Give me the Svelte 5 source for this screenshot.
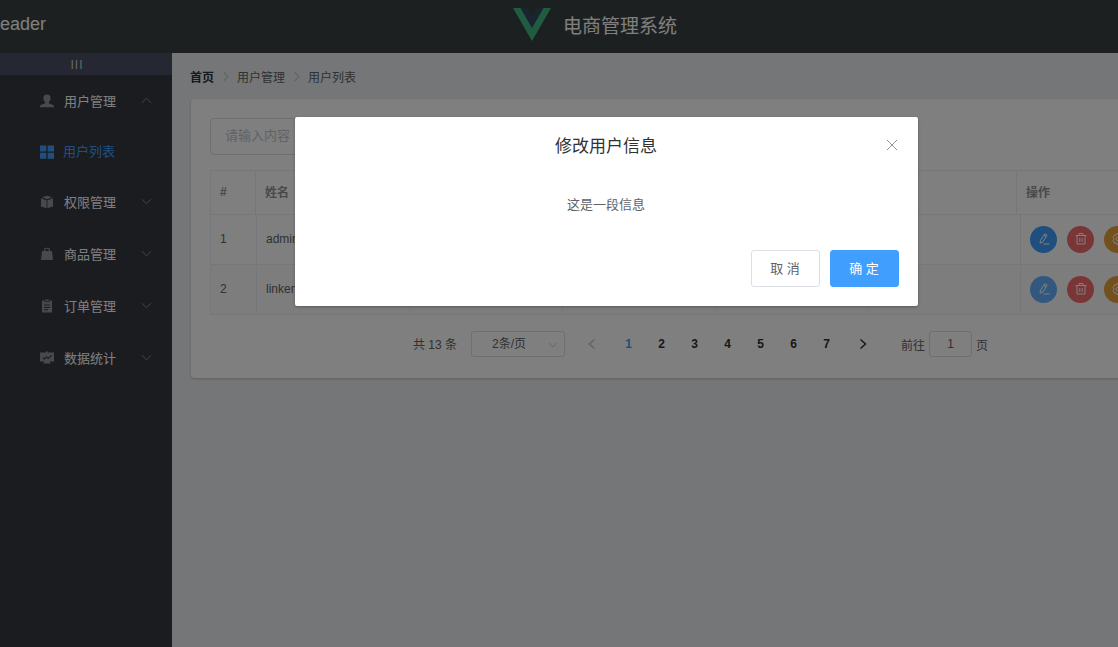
<script>
  const menus = [
    { name: '用户管理', icon: 'user', open: true, children: [{ name: '用户列表' }] },
    { name: '权限管理', icon: 'box' },
    { name: '商品管理', icon: 'goods' },
    { name: '订单管理', icon: 'order' },
    { name: '数据统计', icon: 'data' }
  ];
  const columns = ['#', '姓名', '', '', '', '', '操作'];
  const users = [
    { id: 1, name: 'admin' },
    { id: 2, name: 'linken', hover: true }
  ];
  const pages = [1, 2, 3, 4, 5, 6, 7];
  let current = $state(1);
  let jump = $state('1');
  let query = $state('');
  let dialog = $state(true);
</script>

{#snippet chevron(d, size, width)}
  <svg width={size} height={size} viewBox="0 0 12 12" fill="none" stroke="currentColor" stroke-width={width} aria-hidden="true"><path {d} /></svg>
{/snippet}

<div class="window">
  <div class="shell">
    <header>
      <span class="brand">eader</span>
      <div class="title">
        <svg width="38" height="33" viewBox="0 0 38 33" aria-hidden="true">
          <path fill="#41b883" d="M0 0h7.6L19 19.7 30.4 0H38L19 33z" />
          <path fill="#35495e" d="M7.6 0h7L19 7.6 23.4 0h7L19 19.7z" />
        </svg>
        <span>电商管理系统</span>
      </div>
    </header>

    <div class="body">
      <aside>
        <button class="toggle">|||</button>
        <nav>
          {#each menus as m}
            <button class="menu">
              <svg class="ico" viewBox="0 0 14 14" fill="currentColor" aria-hidden="true">
                {#if m.icon === 'user'}
                  <path d="M7 .5c2.300 0 3.600 1.500 3.600 3.700 0 1.700-.8 3.200-1.800 4v1l4.400 1.700c.6.300.8.800.8 1.500v.8H0v-.8c0-.7.2-1.200.8-1.500l4.400-1.700v-1c-1-.8-1.800-2.300-1.800-4C3.400 2 4.700.5 7 .5z" />
                {:else if m.icon === 'box'}
                  <path d="M7 .8l5 1.500L7 4.300 2 2.300z M1 3.200l5.600 2v8L1 11.400z M13 3.200l-5.600 2v8L13 11.400z" />
                {:else if m.icon === 'goods'}
                  <path fill-rule="evenodd" d="M4 4V3a3 2.200 0 0 1 6 0v1h2l1 9H1l1-9zM5.200 4h3.600V3a1.800 1.200 0 0 0-3.600 0z" />
                {:else if m.icon === 'order'}
                  <path fill-rule="evenodd" d="M2 1.500h2.500V3h5V1.500H12V13.500H2zM4 5.500v1h6v-1zM4 8v1h6V8zM4 10.300v1h4v-1zM5.300.5h3.400v1.700H5.300z" />
                {:else}
                  <path fill-rule="evenodd" d="M0 1.500h6V.5h2v1h6v9H9.500l1.500 2H3l1.500-2H0zM2.500 7.200l1.900 1.500 2.100-2 1.800 1.500 3.700-3.500-.8-.800-3 2.800-1.700-1.500-2.200 2-1.100-.9z" />
                {/if}
              </svg>
              <span>{m.name}</span>
              <i class="arrow">{@render chevron(m.open ? 'M1 8.500l5-5 5 5' : 'M1 3.500l5 5 5-5', 11, 1)}</i>
            </button>
            {#each m.children ?? [] as c}
              <a class="sub" href="#users">
                <svg class="ico" viewBox="0 0 14 14" fill="currentColor" aria-hidden="true"><path d="M0 .5h6.300v6H0zM7.700.5H14v6H7.700zM0 7.800h6.300v6H0zM7.700 7.800H14v6H7.700z" /></svg>
                <span>{c.name}</span>
              </a>
            {/each}
          {/each}
        </nav>
      </aside>

      <main>
        <div class="crumbs">
          <a href="#home">首页</a>
          {@render chevron('M4 1l4.500 5L4 11', 11, 1.2)}
          <span>用户管理</span>
          {@render chevron('M4 1l4.500 5L4 11', 11, 1.2)}
          <span>用户列表</span>
        </div>

        <section class="card">
          <input class="search" aria-label="搜索" placeholder="请输入内容" bind:value={query} />

          <table>
            <thead>
              <tr>{#each columns as c}<th>{c}</th>{/each}</tr>
            </thead>
            <tbody>
              {#each users as u}
                <tr>
                  <td>{u.id}</td>
                  <td>{u.name}</td>
                  <td></td><td></td><td></td><td></td>
                  <td class="ops">
                    <button class="round edit" class:hover={u.hover} aria-label="编辑">
                      <svg viewBox="0 0 12 12" aria-hidden="true"><path d="M6.800.8l2.300 1.300-4.300 7-2.700 1 .4-2.800zM5.900 2.300l2.300 1.300M5.500 11h6" /></svg>
                    </button>
                    <button class="round del" aria-label="删除">
                      <svg viewBox="0 0 12 12" aria-hidden="true"><path d="M.5 2.500h11M4 2.500V.5h4v2M2 2.500v8.500h8V2.500M4.800 5v4M7.200 5v4" /></svg>
                    </button>
                    <button class="round set" aria-label="设置">
                      <svg viewBox="0 0 12 12" aria-hidden="true"><path d="M4.500.7h3l.4 1.500 1.500-.4 1.500 2.600L9.800 6l1.100 1.600-1.500 2.600-1.500-.4-.4 1.500h-3l-.4-1.500-1.500.4L1.100 7.600 2.200 6 1.100 4.400l1.500-2.600 1.500.4z" /><circle cx="6" cy="6" r="2" /></svg>
                    </button>
                  </td>
                </tr>
              {/each}
            </tbody>
          </table>

          <div class="pager">
            <span class="total">共 13 条</span>
            <div class="size">
              <select aria-label="每页条数"><option>2条/页</option></select>
              {@render chevron('M1 3.500l5 5 5-5', 10, 1)}
            </div>
            <button class="step off" aria-label="上一页">{@render chevron('M8.500 1.500L3.500 6l5 4.500', 12, 1.5)}</button>
            {#each pages as p}
              <button class="num" class:active={p === current} onclick={() => (current = p)}>{p}</button>
            {/each}
            <button class="step" aria-label="下一页">{@render chevron('M3.500 1.500L8.500 6l-5 4.500', 12, 1.5)}</button>
            <label class="jump">前往<input bind:value={jump} />页</label>
          </div>
        </section>
      </main>
    </div>

    {#if dialog}
      <div class="mask">
        <div class="dialog" role="dialog" aria-labelledby="dlg-title">
          <button class="close" aria-label="关闭" onclick={() => (dialog = false)}>
            {@render chevron('M1 1l10 10M11 1L1 11', 12, 1)}
          </button>
          <h2 id="dlg-title">修改用户信息</h2>
          <p>这是一段信息</p>
          <footer>
            <button class="btn" onclick={() => (dialog = false)}>取 消</button>
            <button class="btn primary" onclick={() => (dialog = false)}>确 定</button>
          </footer>
        </div>
      </div>
    {/if}
  </div>
</div>

<style>
  :global(body) { margin: 0; }
  .window, .window * { box-sizing: border-box; }
  .window {
    overflow: hidden;
    font-family: "Liberation Sans", "Noto Sans CJK SC", sans-serif;
    font-size: 12px;
    color: #606266;
  }
  button, input, select { font: inherit; color: inherit; margin: 0; }
  button { border: 0; background: none; padding: 0; cursor: pointer; }
  svg { display: block; flex: none; }

  /* The layout is wider than the window and scrolled slightly to the right. */
  .shell {
    position: relative;
    width: calc(100% + 128px);
    min-height: 100vh;
    margin-left: -17px;
    display: flex;
    flex-direction: column;
  }

  header {
    height: 53px;
    display: grid;
    grid-template-columns: 530px 1fr;
    align-items: center;
    background: #3b4141;
    color: #fff;
    font-size: 19px;
  }
  .brand { padding: 0 0 4px 17px; font-size: 18px; }
  .title { display: flex; align-items: center; gap: 12px; padding-bottom: 4px; }

  .body { flex: 1; display: flex; }
  aside { width: 189px; flex: none; background: #373841; color: #fff; }
  .toggle {
    display: block;
    width: 100%;
    height: 22px;
    background: #4a5064;
    font-size: 9px;
    letter-spacing: 2px;
  }
  .menu, .sub {
    display: flex;
    align-items: center;
    width: 100%;
    height: 52px;
    padding: 0 20px 2px 57px;
    gap: 10px;
    font-size: 13px;
    text-align: left;
  }
  .sub { height: 49px; gap: 9px; color: #409eff; text-decoration: none; }
  .ico { width: 14px; height: 14px; margin-top: 2px; color: #909399; }
  .sub .ico { color: inherit; }
  .arrow { margin-left: auto; color: #909399; }

  main { flex: 1; min-width: 0; padding: 0 19px 0 18px; background: #eaedf1; }
  .crumbs { display: flex; align-items: center; gap: 6px; height: 46px; }
  .crumbs a { color: #303133; font-weight: 700; text-decoration: none; }
  .crumbs svg { color: #c0c4cc; }
  .card {
    padding: 19px;
    margin-left: 1px;
    background: #fff;
    border-radius: 4px;
    box-shadow: 0 1px 3px rgba(0, 0, 0, .2);
  }
  .search {
    display: block;
    width: 360px;
    height: 37px;
    padding: 0 14px 2px;
    border: 1px solid #dcdfe6;
    border-radius: 4px;
    background: #fff;
    font-size: 13px;
  }
  .search::placeholder { color: #c0c4cc; opacity: 1; }

  table {
    display: block;
    margin-top: 15px;
    border: 1px solid #ebeef5;
    border-bottom: 0;
  }
  thead, tbody { display: block; }
  tr { display: grid; }
  thead tr { grid-template-columns: 45px repeat(4, 152px) 153px 1fr; height: 44px; }
  tbody tr { grid-template-columns: 46px repeat(4, 153px) 152px 1fr; height: 50px; }
  tbody tr:nth-child(even) { background: #fafafa; }
  th, td {
    display: flex;
    align-items: center;
    padding: 0 9px 2px;
    border-right: 1px solid #ebeef5;
    border-bottom: 1px solid #ebeef5;
  }
  th { color: #909399; font-weight: 700; }
  th:last-child, td:last-child { border-right: 0; }
  .ops { gap: 10px; padding-bottom: 0; }
  .round {
    display: grid;
    place-items: center;
    width: 27px;
    height: 27px;
    padding-bottom: 2px;
    border-radius: 50%;
  }
  .round svg { width: 12px; height: 12px; fill: none; stroke: #fff; stroke-width: 1; }
  .edit { background: #409eff; }
  .edit.hover { background: #66b1ff; }
  .del { background: #f56c6c; }
  .set { background: #e6a23c; }

  .pager { display: flex; align-items: center; justify-content: center; height: 26px; margin: 16px 0 2px; }
  .total { padding-bottom: 2px; }
  .size { position: relative; margin: 0 7px 0 14px; }
  .size select {
    appearance: none;
    display: block;
    width: 94px;
    height: 26px;
    padding: 0 17px 0 20px;
    border: 1px solid #dcdfe6;
    border-radius: 3px;
    background: #fff;
  }
  .size :global(svg) { position: absolute; right: 7px; top: 9px; color: #c0c4cc; pointer-events: none; }
  .num, .step {
    display: grid;
    place-items: center;
    width: 33px;
    height: 26px;
    color: #303133;
    font-weight: 700;
  }
  .num.active { color: #409eff; }
  .step { width: 40px; }
  .step.off { color: #c0c4cc; }
  .jump { display: flex; align-items: center; gap: 4px; margin-left: 18px; }
  .jump input {
    width: 43px;
    height: 26px;
    padding: 0;
    border: 1px solid #dcdfe6;
    border-radius: 3px;
    background: #fff;
    text-align: center;
  }

  .mask { position: absolute; inset: 0; background: rgba(0, 0, 0, .5); }
  .dialog {
    position: relative;
    width: 50%;
    margin: 117px auto 0;
    padding: 18px 19px 19px;
    background: #fff;
    border-radius: 2px;
    box-shadow: 0 1px 3px rgba(0, 0, 0, .3);
    text-align: center;
  }
  .dialog h2 { margin: 0; font-size: 17px; line-height: 24px; font-weight: 400; color: #303133; }
  .dialog p { margin: 0; padding: 36px 0 35px; font-size: 13px; line-height: 20px; }
  .dialog footer { display: flex; justify-content: flex-end; gap: 10px; }
  .close { position: absolute; top: 22px; right: 20px; color: #909399; }
  .btn {
    width: 69px;
    height: 37px;
    padding-bottom: 2px;
    border: 1px solid #dcdfe6;
    border-radius: 3px;
    background: #fff;
    font-size: 13px;
  }
  .btn.primary { border-color: #409eff; background: #409eff; color: #fff; }
</style>
